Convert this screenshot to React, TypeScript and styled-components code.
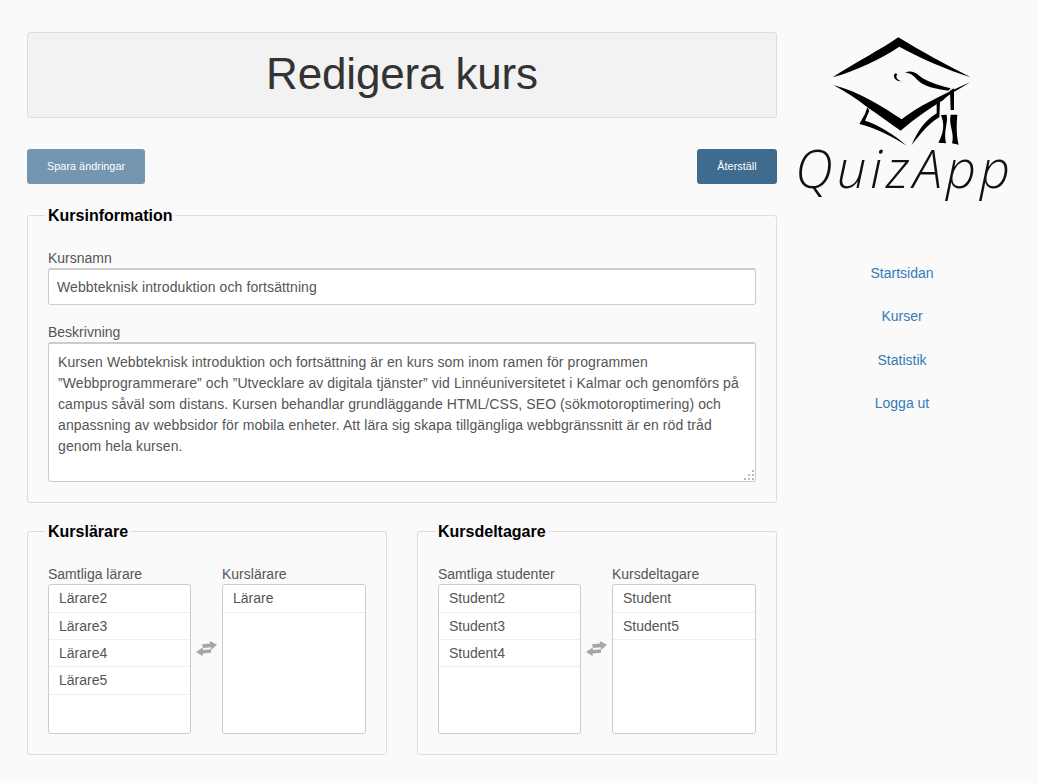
import { type FC } from "react";
import styled, { createGlobalStyle } from "styled-components";

const GlobalStyle = createGlobalStyle`
  html, body {
    margin: 0;
    background: #fafafa;
    font-family: "Liberation Sans", Arial, sans-serif;
    font-size: 14px;
    color: #555;
  }
  * {
    box-sizing: border-box;
  }
`;

const Page = styled.div`
  display: grid;
  grid-template-columns: 750px 250px;
  padding: 32px 0 28px 27px;
`;

const Main = styled.main`
  display: flex;
  flex-direction: column;
`;

const Title = styled.h1`
  margin: 0;
  height: 86px;
  line-height: 82px;
  text-align: center;
  font-size: 44px;
  font-weight: 400;
  letter-spacing: -0.15px;
  color: #333;
  background: #f2f2f2;
  border: 1px solid #ddd;
  border-radius: 3px;
`;

const Actions = styled.div`
  display: flex;
  justify-content: space-between;
  margin: 31px 0 21px;
`;

const Button = styled.button<{ $muted?: boolean }>`
  height: 35px;
  min-width: 80px;
  padding: 0 20px 1px;
  border: 0;
  border-radius: 3px;
  font-family: inherit;
  font-size: 10.9px;
  color: #fff;
  background: ${({ $muted }) => ($muted ? "#7596b0" : "#3f6b8f")};
`;

const Fieldset = styled.fieldset`
  min-width: 0;
  margin: 0;
  padding: 0 20px;
  border: 1px solid #ddd;
  border-radius: 3px;
`;

const InfoFieldset = styled(Fieldset)`
  height: 298px;
  padding-top: 25px;
`;

const Legend = styled.legend`
  padding: 2px 3px 0;
  margin-left: -3px;
  font-size: 16px;
  line-height: 18px;
  font-weight: 700;
  color: #000;
`;

const Label = styled.label`
  display: block;
  line-height: 16px;
  margin-bottom: 2px;
`;

const TextInput = styled.input`
  display: block;
  width: 100%;
  height: 37px;
  margin-bottom: 19px;
  padding: 0 8px;
  border: 1px solid #ccc;
  border-top-width: 2px;
  border-radius: 3px;
  background: #fff;
  font-family: inherit;
  font-size: 14px;
  letter-spacing: 0.1px;
  color: #555;
  outline: none;
`;

const AreaWrap = styled.div`
  position: relative;
  height: 140px;
`;

const TextArea = styled.textarea`
  display: block;
  width: 100%;
  height: 100%;
  padding: 8px 9px 9px;
  border: 1px solid #ccc;
  border-top-width: 2px;
  border-radius: 3px;
  background: #fff;
  font-family: inherit;
  font-size: 14px;
  line-height: 21px;
  letter-spacing: 0.09px;
  color: #555;
  resize: none;
  outline: none;
`;

const Grip = styled.svg`
  position: absolute;
  right: 1px;
  bottom: 1px;
`;

const Columns = styled.div`
  display: grid;
  grid-template-columns: 360px 360px;
  gap: 30px;
  margin-top: 18px;
`;

const PickerFieldset = styled(Fieldset)`
  height: 234px;
  padding-top: 25px;
`;

const Picker = styled.div`
  display: grid;
  grid-template-columns: 143px 1fr 144px;
  align-items: stretch;
`;

const PickerColumn = styled.div`
  display: flex;
  flex-direction: column;
`;

const PickerLabel = styled(Label)`
  white-space: nowrap;
`;

const List = styled.ul`
  height: 150px;
  margin: 0;
  padding: 0;
  list-style: none;
  background: #fff;
  border: 1px solid #ccc;
  border-radius: 3px;
`;

const ListItem = styled.li`
  height: 27.4px;
  line-height: 26px;
  padding-left: 10px;
  border-bottom: 1px solid #eee;
  color: #555;

  &:first-child {
    height: 27.5px;
  }
`;

const SwapIcon = styled.svg`
  display: block;
  align-self: center;
  justify-self: center;
  margin-bottom: 3px;
`;

const Sidebar = styled.aside`
  display: flex;
  flex-direction: column;
  align-items: center;
`;

const Logo = styled.svg`
  display: block;
  align-self: flex-start;
  margin: -12px 0 0 3px;
`;

const Nav = styled.nav`
  display: flex;
  flex-direction: column;
  align-items: center;
  gap: 27.4px;
  margin-top: 45px;
`;

const NavLink = styled.a`
  line-height: 16px;
  color: #337ab7;
  text-decoration: none;
`;

const SwapArrows: FC = () => (
  <SwapIcon width="21" height="15" viewBox="0 0 21 15" fill="#a6a6a6">
    <path d="M6 3.2 L14 2.4 L13.8 0 L21 3.8 L15 9 L14.8 6.2 L7 7 Z" />
    <path d="M15 8.2 L7 9 L6.6 6.6 L0 11 L6.6 15 L6.8 12.6 L15 11.8 Z" />
  </SwapIcon>
);

const PickerBlock: FC<{
  leftLabel: string;
  rightLabel: string;
  left: string[];
  right: string[];
}> = ({ leftLabel, rightLabel, left, right }) => (
  <Picker>
    <PickerColumn>
      <PickerLabel>{leftLabel}</PickerLabel>
      <List>
        {left.map((name) => (
          <ListItem key={name}>{name}</ListItem>
        ))}
      </List>
    </PickerColumn>
    <SwapArrows />
    <PickerColumn>
      <PickerLabel>{rightLabel}</PickerLabel>
      <List>
        {right.map((name) => (
          <ListItem key={name}>{name}</ListItem>
        ))}
      </List>
    </PickerColumn>
  </Picker>
);

const description =
  "Kursen Webbteknisk introduktion och fortsättning är en kurs som inom ramen för programmen ”Webbprogrammerare” och ”Utvecklare av digitala tjänster” vid Linnéuniversitetet i Kalmar och genomförs på campus såväl som distans. Kursen behandlar grundläggande HTML/CSS, SEO (sökmotoroptimering) och anpassning av webbsidor för mobila enheter. Att lära sig skapa tillgängliga webbgränssnitt är en röd tråd genom hela kursen.";

export default function App() {
  return (
    <>
      <GlobalStyle />
      <Page>
        <Main>
          <Title>Redigera kurs</Title>
          <Actions>
            <Button $muted>Spara ändringar</Button>
            <Button>Återställ</Button>
          </Actions>
          <InfoFieldset>
            <Legend>Kursinformation</Legend>
            <Label>Kursnamn</Label>
            <TextInput readOnly value="Webbteknisk introduktion och fortsättning" />
            <Label>Beskrivning</Label>
            <AreaWrap>
              <TextArea readOnly value={description} />
              <Grip width="12" height="12" viewBox="0 0 12 12" fill="#bbb">
                <rect x="9" y="1" width="2" height="2" />
                <rect x="5" y="5" width="2" height="2" />
                <rect x="9" y="5" width="2" height="2" />
                <rect x="1" y="9" width="2" height="2" />
                <rect x="5" y="9" width="2" height="2" />
                <rect x="9" y="9" width="2" height="2" />
              </Grip>
            </AreaWrap>
          </InfoFieldset>
          <Columns>
            <PickerFieldset>
              <Legend>Kurslärare</Legend>
              <PickerBlock
                leftLabel="Samtliga lärare"
                rightLabel="Kurslärare"
                left={["Lärare2", "Lärare3", "Lärare4", "Lärare5"]}
                right={["Lärare"]}
              />
            </PickerFieldset>
            <PickerFieldset>
              <Legend>Kursdeltagare</Legend>
              <PickerBlock
                leftLabel="Samtliga studenter"
                rightLabel="Kursdeltagare"
                left={["Student2", "Student3", "Student4"]}
                right={["Student", "Student5"]}
              />
            </PickerFieldset>
          </Columns>
        </Main>
        <Sidebar>
          <Logo width="250" height="200" viewBox="0 0 750 600">
            <path d="M158 172 C230 125 300 90 355 52 C420 92 500 135 572 172 C500 148 420 115 358 80 C300 118 230 152 158 172 Z" />
            <path d="M160 195 C240 215 310 262 365 298 C410 262 490 222 570 187 C530 212 508 222 490 240 C450 265 405 295 362 332 C330 310 295 285 262 262 C230 235 195 215 160 195 Z" />
            <path d="M262 262 L268 272 L255 302 C290 312 345 345 380 377 C340 352 290 325 238 312 L255 282 Z" />
            <path d="M395 375 C410 340 430 305 470 280 L470 250 L480 245 L478 292 C445 310 420 345 395 375 Z" />
            <path d="M375 157 C390 152 405 155 415 165 C430 180 470 195 512 205 L505 212 C470 208 430 200 410 178 C400 165 390 160 375 157 Z" />
            <path d="M345 160 C337 170 345 185 365 184 C352 180 345 172 352 162 Z" />
            <path d="M510 212 L522 205 L522 270 L512 270 Z" />
            <path d="M483 285 L500 284 C505 310 490 330 498 370 L475 368 C490 340 495 315 483 285 Z" />
            <path d="M512 284 L532 284 C530 310 528 340 536 374 L516 370 C525 340 505 315 512 284 Z" />
            <text
              x="45"
              y="505"
              textLength="645"
              lengthAdjust="spacing"
              fontFamily="'Open Sans', sans-serif"
              fontStyle="italic"
              fontWeight="300"
              fontSize="158"
              fill="#111"
            >
              QuizApp
            </text>
          </Logo>
          <Nav>
            <NavLink href="#">Startsidan</NavLink>
            <NavLink href="#">Kurser</NavLink>
            <NavLink href="#">Statistik</NavLink>
            <NavLink href="#">Logga ut</NavLink>
          </Nav>
        </Sidebar>
      </Page>
    </>
  );
}
